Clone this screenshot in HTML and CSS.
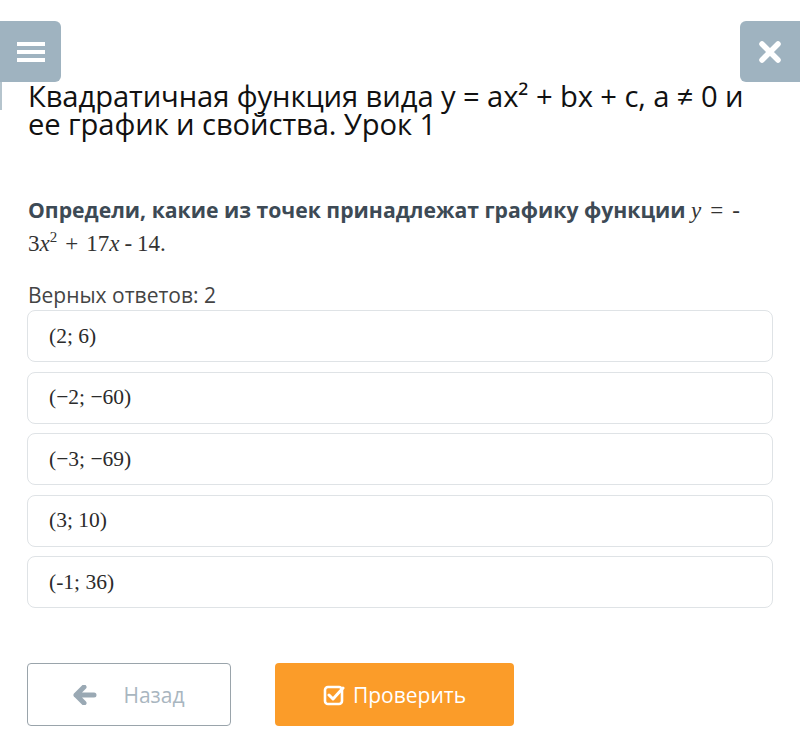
FILE: index.html
```html
<!DOCTYPE html>
<html lang="ru">
<head>
<meta charset="utf-8">
<link rel="stylesheet" href="styles.css">
</head>
<body>
<div class="page">
  <div class="topbar">
    <button class="icon-btn menu-btn" aria-label="menu">
      <span class="bar"></span><span class="bar"></span><span class="bar"></span>
    </button>
    <button class="icon-btn close-btn" aria-label="close">
      <svg width="24" height="24" viewBox="0 0 24 24"><path d="M4 4 L20 20 M20 4 L4 20" stroke="#fff" stroke-width="5.5" stroke-linecap="round"/></svg>
    </button>
  </div>
  <h1 class="title">Квадратичная функция вида y = ax² + bx + c, a ≠ 0 и ее график и свойства. Урок 1</h1>
  <p class="question">Определи, какие из точек принадлежат графику функции <span class="math"><i>y</i><span class="rel">=</span>-<br>3<i>x</i><sup>2</sup><span class="op">+</span>17<i>x</i><span class="op2">-</span>14.</span></p>
  <p class="count">Верных ответов: 2</p>
  <div class="options">
    <div class="option"><span class="math">(2; 6)</span></div>
    <div class="option"><span class="math">(−2; −60)</span></div>
    <div class="option"><span class="math">(−3; −69)</span></div>
    <div class="option"><span class="math">(3; 10)</span></div>
    <div class="option"><span class="math">(-1; 36)</span></div>
  </div>
  <div class="actions">
    <button class="btn btn-back">
      <svg width="24" height="20" viewBox="0 0 24 20"><path d="M11 2 L3 10 L11 18 M3 10 H21" fill="none" stroke="#9aa9b4" stroke-width="5" stroke-linecap="round" stroke-linejoin="round"/></svg>
      <span>Назад</span>
    </button>
    <button class="btn btn-check">
      <svg width="22" height="22" viewBox="0 0 22 22"><rect x="2" y="3" width="17" height="17" rx="3" fill="none" stroke="#fff" stroke-width="2.6"/><path d="M6 11 L10 15 L20 4" fill="none" stroke="#fff" stroke-width="3" stroke-linecap="round" stroke-linejoin="round"/></svg>
      <span>Проверить</span>
    </button>
  </div>
</div>
</body>
</html>
```
FILE: styles.css
```css
* { box-sizing: border-box; }
html, body { margin: 0; padding: 0; background: #fff; }
body { font-family: "Open Sans", "Noto Sans", sans-serif; color: #1a1a1a; }
.page { width: 800px; height: 739px; overflow: hidden; }
.topbar { display: flex; justify-content: space-between; padding-top: 21px; height: 82px; }
.icon-btn { width: 61px; height: 61px; border: 0; background: #9fb3c0; display: flex; align-items: center; justify-content: center; padding: 0; position: relative; }
.menu-btn { flex-direction: column; gap: 4px; border-radius: 0 6px 6px 0; padding-left: 0; }
.menu-btn::after { content: ""; position: absolute; left: 0; top: 61px; width: 2px; height: 28px; background: #b5c4cd; }
.menu-btn .bar { width: 28px; height: 4px; background: #fff; display: block; }
.close-btn { width: 60px; border-radius: 6px 0 0 6px; }
.title { margin: 0; padding: 0 40px 0 28px; font-weight: 400; font-size: 29.2px; line-height: 28px; color: #111; letter-spacing: -0.1px; }
.question { margin: 56px 0 0; padding: 0 28px; font-weight: 700; font-size: 21.2px; line-height: 32px; color: #3d4a55; }
.math { font-family: "Liberation Serif", "DejaVu Serif", serif; font-weight: 400; font-size: 23px; color: #333; }
.math .rel { margin: 0 9px; }
.math .op { margin: 0 8px; }
.math .op2 { margin: 0 5px; }
.math sup { font-size: 15px; line-height: 0; }
.count { margin: 22px 0 0; padding: 0 28px; font-size: 21px; line-height: 26px; color: #444; }
.options { display: flex; flex-direction: column; gap: 9.5px; padding: 2px 27px 0; }
.option { height: 52px; border: 1px solid #dfe3e6; border-radius: 8px; display: flex; align-items: center; padding-left: 21px; }
.option .math { font-size: 21.5px; color: #2b2b2b; }
.actions { display: flex; gap: 44px; padding: 55px 27px 0; }
.btn { height: 63px; border-radius: 4px; display: flex; align-items: center; justify-content: center; font-family: "Open Sans", sans-serif; font-size: 21px; }
.btn-back { width: 204px; background: #fff; border: 1px solid #9aa4ab; color: #a9b6bf; gap: 26px; padding-right: 6px; }
.btn-check { width: 239px; background: #fb9c29; border: 0; color: #fff; gap: 8px; }
```
